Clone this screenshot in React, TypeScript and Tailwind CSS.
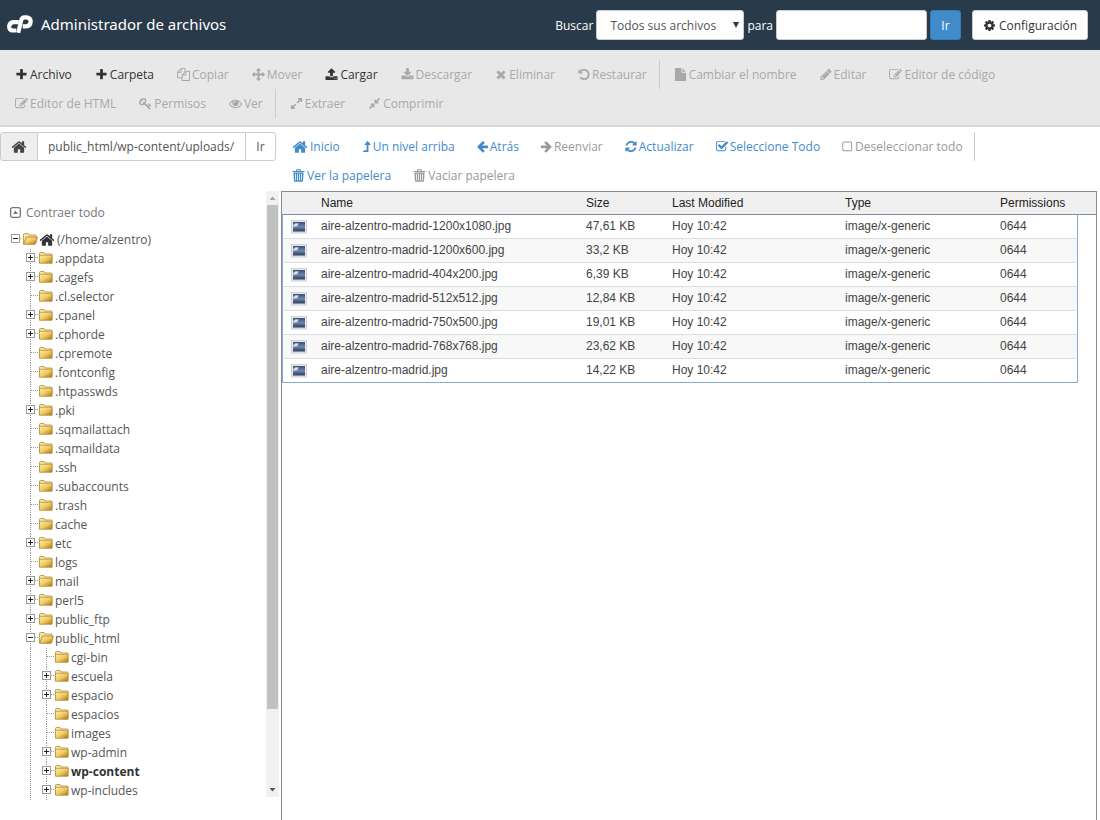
import { useState, type ReactNode } from "react";

const paths = {
  plus: "M1600 736v192q0 40-28 68t-68 28h-416v416q0 40-28 68t-68 28h-192q-40 0-68-28t-28-68v-416h-416q-40 0-68-28t-28-68v-192q0-40 28-68t68-28h416v-416q0-40 28-68t68-28h192q40 0 68 28t28 68v416h416q40 0 68 28t28 68z",
  move: "M1792 896q0 26-19 45l-256 256q-19 19-45 19t-45-19-19-45v-128h-384v384h128q26 0 45 19t19 45-19 45l-256 256q-19 19-45 19t-45-19l-256-256q-19-19-19-45t19-45 45-19h128v-384h-384v128q0 26-19 45t-45 19-45-19l-256-256q-19-19-19-45t19-45l256-256q19-19 45-19t45 19 19 45v128h384v-384h-128q-26 0-45-19t-19-45 19-45l256-256q19-19 45-19t45 19l256 256q19 19 19 45t-19 45-45 19h-128v384h384v-128q0-26 19-45t45-19 45 19l256 256q19 19 19 45z",
  copy: "M1696 384q40 0 68 28t28 68v1216q0 40-28 68t-68 28h-960q-40 0-68-28t-28-68v-288h-544q-40 0-68-28t-28-68v-672q0-40 20-88t48-76l408-408q28-28 76-48t88-20h416q40 0 68 28t28 68v328q68-40 128-40h416zm-544 213l-299 299h299v-299zm-640-384l-299 299h299v-299zm196 647l316-316v-416h-384v416q0 40-28 68t-68 28h-416v640h512v-256q0-40 20-88t48-76zm956 804v-1152h-384v416q0 40-28 68t-68 28h-416v640h896z",
  upload: "M1344 1472q0-26-19-45t-45-19-45 19-19 45 19 45 45 19 45-19 19-45zm256 0q0-26-19-45t-45-19-45 19-19 45 19 45 45 19 45-19 19-45zm128-224v320q0 40-28 68t-68 28h-1472q-40 0-68-28t-28-68v-320q0-40 28-68t68-28h427q21 56 70.5 92t110.5 36h256q61 0 110.5-36t70.5-92h427q40 0 68 28t28 68zm-325-648q-17 40-59 40h-256v448q0 26-19 45t-45 19h-256q-26 0-45-19t-19-45v-448h-256q-42 0-59-40-17-39 14-69l448-448q18-19 45-19t45 19l448 448q31 30 14 69z",
  download: "M1344 1344q0-26-19-45t-45-19-45 19-19 45 19 45 45 19 45-19 19-45zm256 0q0-26-19-45t-45-19-45 19-19 45 19 45 45 19 45-19 19-45zm128-224v320q0 40-28 68t-68 28h-1472q-40 0-68-28t-28-68v-320q0-40 28-68t68-28h465l135 136q58 56 136 56t136-56l136-136h464q40 0 68 28t28 68zm-325-569q17 41-14 70l-448 448q-18 19-45 19t-45-19l-448-448q-31-29-14-70 17-39 59-39h256v-448q0-26 19-45t45-19h256q26 0 45 19t19 45v448h256q42 0 59 39z",
  times: "M1490 1322q0 40-28 68l-136 136q-28 28-68 28t-68-28l-294-294-294 294q-28 28-68 28t-68-28l-136-136q-28-28-28-68t28-68l294-294-294-294q-28-28-28-68t28-68l136-136q28-28 68-28t68 28l294 294 294-294q28-28 68-28t68 28l136 136q28 28 28 68t-28 68l-294 294 294 294q28 28 28 68z",
  undo: "M1664 896q0 156-61 298t-164 245-245 164-298 61q-172 0-327-72.5t-264-204.5q-7-10-6.5-22.5t8.5-20.5l137-138q10-9 25-9 16 2 23 12 73 95 179 147t225 52q104 0 198.5-40.5t163.5-109.5 109.5-163.5 40.5-198.5-40.5-198.5-109.5-163.5-163.5-109.5-198.5-40.5q-98 0-188 35.5t-160 101.5l137 138q31 30 14 69-17 40-59 40h-448q-26 0-45-19t-19-45v-448q0-42 40-59 39-17 69 14l130 129q107-101 244.5-156.5t284.5-55.5q156 0 298 61t245 164 164 245 61 298z",
  file: "M1152 512v-472q22 14 36 28l408 408q14 14 28 36h-472zm-128 32q0 40 28 68t68 28h544v1056q0 40-28 68t-68 28h-1344q-40 0-68-28t-28-68v-1600q0-40 28-68t68-28h800v544z",
  pencil: "M491 1536l91-91-235-235-91 91v107h128v128h107zm523-928q0-22-22-22-10 0-17 7l-542 542q-7 7-7 17 0 22 22 22 10 0 17-7l542-542q7-7 7-17zm-54-192l416 416-832 832h-416v-416zm683 96q0 53-37 90l-166 166-416-416 166-165q36-38 90-38 53 0 91 38l235 234q37 39 37 91z",
  edit: "M888 1184l116-116-152-152-116 116v56h96v96h56zm440-720q-16-16-33 1l-350 350q-17 17-1 33t33-1l350-350q17-17 1-33zm80 594v190q0 119-84.5 203.5t-203.5 84.5h-832q-119 0-203.5-84.5t-84.5-203.5v-832q0-119 84.5-203.5t203.5-84.5h832q63 0 117 25 15 7 18 23 3 17-9 29l-49 49q-14 14-32 8-23-6-45-6h-832q-66 0-113 47t-47 113v832q0 66 47 113t113 47h832q66 0 113-47t47-113v-126q0-13 9-22l64-64q15-15 35-7t20 29zm-96-738l288 288-672 672h-288v-288zm444 132l-92 92-288-288 92-92q28-28 68-28t68 28l152 152q28 28 28 68t-28 68z",
  key: "M832 512q0-80-56-136t-136-56-136 56-56 136q0 42 19 83-41-19-83-19-80 0-136 56t-56 136 56 136 136 56 136-56 56-136q0-42-19-83 41 19 83 19 80 0 136-56t56-136zm851 704q0 17-49 66t-66 49q-9 0-28.5-16t-36.5-33-38.5-40-24.5-26l-96 96 220 220q28 28 28 68 0 42-39 81t-81 39q-40 0-68-28l-671-671q-176 131-365 131-163 0-265.5-102.5t-102.5-265.5q0-160 95-313t248-248 313-95q163 0 265.5 102.5t102.5 265.5q0 189-131 365l355 355 96-96q-3-3-26-24.5t-40-38.5-33-36.5-16-28.5q0-17 49-66t66-49q13 0 23 10 6 6 46 44.5t82 79.5 86.5 86 73 78 28.5 41z",
  eye: "M1664 960q-152-236-381-353 61 104 61 225 0 185-131.5 316.5t-316.5 131.5-316.5-131.5-131.5-316.5q0-121 61-225-229 117-381 353 133 205 333.5 326.5t434.5 121.5 434.5-121.5 333.5-326.5zm-720-384q0-20-14-34t-34-14q-125 0-214.5 89.5t-89.5 214.5q0 20 14 34t34 14 34-14 14-34q0-86 61-147t147-61q20 0 34-14t14-34zm848 384q0 34-20 69-140 230-376.5 368.5t-499.5 138.5-499.5-139-376.5-368q-20-35-20-69t20-69q140-229 376.5-368t499.5-139 499.5 139 376.5 368q20 35 20 69z",
  expand: "M883 1056q0 13-10 23l-332 332 144 144q19 19 19 45t-19 45-45 19h-448q-26 0-45-19t-19-45v-448q0-26 19-45t45-19 45 19l144 144 332-332q10-10 23-10t23 10l114 114q10 10 10 23zm781-864v448q0 26-19 45t-45 19-45-19l-144-144-332 332q-10 10-23 10t-23-10l-114-114q-10-10-10-23t10-23l332-332-144-144q-19-19-19-45t19-45 45-19h448q26 0 45 19t19 45z",
  compress: "M896 960v448q0 26-19 45t-45 19-45-19l-144-144-332 332q-10 10-23 10t-23-10l-114-114q-10-10-10-23t10-23l332-332-144-144q-19-19-19-45t19-45 45-19h448q26 0 45 19t19 45zm755-672q0 13-10 23l-332 332 144 144q19 19 19 45t-19 45-45 19h-448q-26 0-45-19t-19-45v-448q0-26 19-45t45-19 45 19l144 144 332-332q10-10 23-10t23 10l114 114q10 10 10 23z",
  cog: "M1152 896q0-106-75-181t-181-75-181 75-75 181 75 181 181 75 181-75 75-181zm512-109v222q0 12-8 23t-20 13l-185 28q-19 54-39 91 35 50 107 138 10 12 10 25t-9 23q-27 37-99 108t-94 71q-12 0-26-9l-138-108q-44 23-91 38-16 136-29 186-7 28-36 28h-222q-14 0-24.5-8.5t-11.5-21.5l-28-184q-49-16-90-37l-141 107q-10 9-25 9-14 0-25-11-126-114-165-168-7-10-7-23 0-12 8-23 15-21 51-66.5t54-70.5q-27-50-41-99l-183-27q-13-2-21-12.5t-8-23.5v-222q0-12 8-23t19-13l186-28q14-46 39-92-40-57-107-138-10-12-10-24 0-10 9-23 26-36 98.5-107.5t94.5-71.5q13 0 26 10l138 107q44-23 91-38 16-136 29-186 7-28 36-28h222q14 0 24.5 8.5t11.5 21.5l28 184q49 16 90 37l142-107q9-9 24-9 13 0 25 10 129 119 165 170 7 8 7 22 0 12-8 23-15 21-51 66.5t-54 70.5q26 50 41 98l183 28q13 2 21 12.5t8 23.5z",
  home: "M1472 992v480q0 26-19 45t-45 19h-384v-384h-256v384h-384q-26 0-45-19t-19-45v-480q0-1 .5-3t.5-3l575-474 575 474q1 2 1 6zm223-69l-62 74q-8 9-21 11h-3q-13 0-21-7l-692-577-692 577q-12 8-24 7-13-2-21-11l-62-74q-8-10-7-23.5t11-21.5l719-599q32-26 76-26t76 26l244 204v-195q0-14 9-23t23-9h192q14 0 23 9t9 23v408l219 182q10 8 11 21.5t-7 23.5z",
  levelUp: "M400 1664h736q32 0 32-32V704h224q42 0 58-36t-11-69L1090 182q-50-58-100 0L640 599q-27 33-11 69t58 36h225v704H624q-14 0-24 11l-224 192q-16 16-8 34t32 19z",
  left: "M1664 896v128q0 53-32.5 90.5t-84.5 37.5h-704l293 294q38 36 38 90t-38 90l-75 76q-37 37-90 37-52 0-91-37l-651-652q-37-37-37-90 0-52 37-91l651-650q38-38 91-38 52 0 90 38l75 74q38 38 38 91t-38 91l-293 293h704q52 0 84.5 37.5t32.5 90.5z",
  right: "M128 896v128q0 53 32.500 90.500t84.500 37.500h704l-293 294q-38 36-38 90t38 90l75 76q37 37 90 37 52 0 91-37l651-652q37-37 37-90 0-52-37-91l-651-650q-38-38-91-38-52 0-90 38l-75 74q-38 38-38 91t38 91l293 293h-704q-52 0-84.500 37.500t-32.500 90.500z",
  refresh: "M1639 1056q0 5-1 7-64 268-268 434.5t-478 166.5q-146 0-282.5-55t-243.5-157l-129 129q-19 19-45 19t-45-19-19-45v-448q0-26 19-45t45-19h448q26 0 45 19t19 45-19 45l-137 137q71 66 161 102t187 36q134 0 250-65t186-179q11-17 53-117 8-23 30-23h192q13 0 22.5 9.5t9.5 22.5zm25-800v448q0 26-19 45t-45 19h-448q-26 0-45-19t-19-45 19-45l138-138q-148-137-349-137-134 0-250 65t-186 179q-11 17-53 117-8 23-30 23h-199q-13 0-22.5-9.5t-9.500-22.500v-7q65-268 270-434.500t480-166.500q146 0 284 55.500t245 156.500l130-129q19-19 45-19t45 19 19 45z",
  checked: "M1472 930v318q0 119-84.5 203.5t-203.5 84.5h-832q-119 0-203.5-84.5t-84.5-203.5v-832q0-119 84.5-203.5t203.5-84.5h832q63 0 117 25 15 7 18 23 3 17-9 29l-49 49q-10 10-23 10-3 0-9-2-23-6-45-6h-832q-66 0-113 47t-47 113v832q0 66 47 113t113 47h832q66 0 113-47t47-113v-254q0-13 9-22l64-64q10-10 23-10 6 0 12 3 20 8 20 29zm231-489l-814 814q-24 24-57 24t-57-24l-430-430q-24-24-24-57t24-57l110-110q24-24 57-24t57 24l263 263 647-647q24-24 57-24t57 24l110 110q24 24 24 57t-24 57z",
  square: "M420 200h872q100 0 170 70t70 170v872q0 100-70 170t-170 70H420q-100 0-170-70t-70-170V440q0-100 70-170t170-70zm0 128q-112 0-112 112v872q0 112 112 112h872q112 0 112-112V440q0-112-112-112z",
  collapse: "M480 128h832q146 0 249 103t103 249v832q0 146-103 249t-249 103H480q-146 0-249-103t-103-249V480q0-146 103-249t249-103zm0 190q-162 0-162 162v832q0 162 162 162h832q162 0 162-162V480q0-162-162-162zM896 620l330 480H566z",
  trash: "M640 40h512q70 0 70 70v150h500v150H70V260h500V110q0-70 70-70zm70 130v90h372v-90zM200 490h1392l-70 1160q-8 110-118 110H388q-110 0-118-110zM420 640l40 960h110l-40-960zm290 0v960h110V640zm262 0v960h110V640zm290 0l-40 960h110l40-960z",
};

type IconName = keyof typeof paths;

function Icon({ name, className = "h-[13px] w-[13px]" }: { name: IconName; className?: string }) {
  return (
    <svg viewBox="0 0 1792 1792" preserveAspectRatio="xMidYMid slice" fill="currentColor" fillRule={name === "square" || name === "collapse" || name === "trash" ? "evenodd" : "nonzero"} aria-hidden="true" className={`shrink-0 overflow-visible ${className}`}>
      <path d={paths[name]} />
    </svg>
  );
}

function Logo() {
  return (
    <svg viewBox="0 0 26 18" aria-hidden="true" className="h-[18px] w-[26px]" fill="none" stroke="currentColor" strokeWidth="4.200">
      <path d="M11.800 7.100H6.400Q2.900 7.400 2.200 11q-.2 4.500 3.500 4.500h3.600" />
      <path d="M11.200 17.800l3-12.400Q14.800 2.400 17.600 2.300h1.600q4.400.2 4.500 4.200-.3 4.600-4.800 4.900h-3.200" />
    </svg>
  );
}

// Glyphs narrower than their square grid take less room beside the label.
const narrowIcons: Partial<Record<IconName, string>> = {
  home: "h-4 w-4",
  times: "h-[13px] w-3",
  undo: "h-[13px] w-3",
  pencil: "h-[13px] w-3",
  refresh: "h-[13px] w-3",
  checked: "h-[13px] w-3",
  left: "h-[13px] w-[11px]",
  right: "h-[13px] w-[11px]",
  square: "h-[13px] w-[11px]",
  levelUp: "h-[13px] w-[9px]",
};

function Tool({ icon, children, tone }: { icon: IconName; children: ReactNode; tone: "on" | "off" | "link" | "muted" }) {
  const tones = {
    on: "text-[#333333]",
    off: "text-[#a8a8a8]",
    link: "text-[#428bca]",
    muted: "text-[#999999]",
  };
  return (
    <button type="button" className={`flex h-[29px] items-center gap-0.5 px-[11px] whitespace-nowrap ${tones[tone]}`}>
      <Icon name={icon} className={narrowIcons[icon]} />
      {children}
    </button>
  );
}

function Divider() {
  return <span className="mr-0.5 h-[29px] w-px bg-[#cccccc]" />;
}

function Folder({ open = false }: { open?: boolean }) {
  return (
    <svg viewBox="0 0 16 15" aria-hidden="true" className="h-[15px] w-4 shrink-0">
      <defs>
        <linearGradient id="folderFill" x1="0" y1="0" x2="1" y2="1">
          <stop offset="0" stopColor="#fdeea6" />
          <stop offset="0.5" stopColor="#f0cb62" />
          <stop offset="1" stopColor="#a87414" />
        </linearGradient>
      </defs>
      <path d="M1.500 11.500V2.500q0-1 1-1h3.500l1 1.500h6.500q.5 0 .5.500v8z" fill="#f6e3a0" stroke="#b58b35" strokeWidth=".8" />
      {open ? (
        <path d="M1.500 12.300L4.500 5H15.500L13 12.300z" fill="url(#folderFill)" stroke="#a87d28" strokeWidth=".8" />
      ) : (
        <path d="M1.500 4.300H14V12.300H1.500z" fill="url(#folderFill)" stroke="#b08a3a" strokeWidth=".7" />
      )}
    </svg>
  );
}

function Branch({ state }: { state: "plus" | "minus" | "leaf" }) {
  return (
    <svg viewBox="0 0 16 19" shapeRendering="crispEdges" aria-hidden="true" className="h-[19px] w-4 shrink-0" fill="none">
      <path d="M8.500 0V19" stroke="#999" strokeDasharray="1 1" />
      <path d="M9 8.500H16" stroke="#999" strokeDasharray="1 1" />
      {state !== "leaf" && (
        <>
          <rect x="4.500" y="4.500" width="8" height="8" fill="#fff" stroke="#999" />
          <path d={state === "plus" ? "M6 8.500h5M8.500 6v5" : "M6 8.500h5"} stroke="#222" />
        </>
      )}
    </svg>
  );
}

type Node = { name: string; state: "plus" | "minus" | "leaf"; children?: Node[] };

const leaf = (name: string): Node => ({ name, state: "leaf" });
const closed = (name: string): Node => ({ name, state: "plus" });

const tree: Node[] = [
  closed(".appdata"),
  closed(".cagefs"),
  leaf(".cl.selector"),
  closed(".cpanel"),
  closed(".cphorde"),
  leaf(".cpremote"),
  leaf(".fontconfig"),
  leaf(".htpasswds"),
  closed(".pki"),
  leaf(".sqmailattach"),
  leaf(".sqmaildata"),
  leaf(".ssh"),
  leaf(".subaccounts"),
  leaf(".trash"),
  leaf("cache"),
  closed("etc"),
  leaf("logs"),
  closed("mail"),
  closed("perl5"),
  closed("public_ftp"),
  {
    name: "public_html",
    state: "minus",
    children: [
      leaf("cgi-bin"),
      closed("escuela"),
      closed("espacio"),
      leaf("espacios"),
      leaf("images"),
      closed("wp-admin"),
      closed("wp-content"),
      closed("wp-includes"),
    ],
  },
];

function TreeList({ nodes, nested = false }: { nodes: Node[]; nested?: boolean }) {
  return (
    <ul className={nested ? "ml-2 border-l border-dotted border-[#999999] pl-[7px]" : "pl-[22px]"}>
      {nodes.map((node) => (
        <li key={node.name}>
          <div className={`flex h-[19px] items-center ${node.name === "wp-content" ? "font-bold text-[#333333]" : ""}`}>
            <Branch state={node.state} />
            <Folder open={node.state === "minus"} />
            <span className="pl-px">{node.name}</span>
          </div>
          {node.children && <TreeList nodes={node.children} nested />}
        </li>
      ))}
    </ul>
  );
}

const files = [
  ["aire-alzentro-madrid-1200x1080.jpg", "47,61 KB"],
  ["aire-alzentro-madrid-1200x600.jpg", "33,2 KB"],
  ["aire-alzentro-madrid-404x200.jpg", "6,39 KB"],
  ["aire-alzentro-madrid-512x512.jpg", "12,84 KB"],
  ["aire-alzentro-madrid-750x500.jpg", "19,01 KB"],
  ["aire-alzentro-madrid-768x768.jpg", "23,62 KB"],
  ["aire-alzentro-madrid.jpg", "14,22 KB"],
];

function ImageIcon() {
  return (
    <svg viewBox="0 0 16 14" aria-hidden="true" className="ml-2 h-3.5 w-4">
      <defs>
        <linearGradient id="photoFill" x1="0" y1="0" x2="0" y2="1">
          <stop offset="0" stopColor="#3c4f70" />
          <stop offset="0.5" stopColor="#6c86ad" />
          <stop offset="1" stopColor="#2b3a58" />
        </linearGradient>
      </defs>
      <rect x=".5" y=".5" width="15" height="12.500" fill="#e4e7ec" stroke="#cdd1d8" />
      <rect x="2" y="2" width="12" height="9.500" fill="url(#photoFill)" />
      <path d="M2.500 4.500q2-2 5-1l-1 2.500-4 1z" fill="#d5deeb" />
    </svg>
  );
}

export default function App() {
  const [path, setPath] = useState("public_html/wp-content/uploads/");
  const [query, setQuery] = useState("");
  return (
    <div className="flex min-h-screen flex-col bg-white font-['Open_Sans',sans-serif] text-[12px] leading-[19px] text-[#555555]">
      <header className="flex h-[50px] items-center justify-between bg-[#293a4a] pr-3 pl-[7px] text-white">
        <div className="flex items-center gap-2 pb-0.5">
          <Logo />
          <h1 className="font-['Noto_Sans',sans-serif] text-[15px]">Administrador de archivos</h1>
        </div>
        <form className="flex items-center gap-[3px]" onSubmit={(e) => e.preventDefault()}>
          <label htmlFor="scope">Buscar</label>
          <div className="relative">
            <select id="scope" className="block h-[30px] w-[148px] appearance-none rounded-[3px] border border-[#cccccc] bg-white pl-[13px] text-[#555555]">
              <option>Todos sus archivos</option>
            </select>
            <svg viewBox="0 0 6 6" aria-hidden="true" className="pointer-events-none absolute top-3 right-[5px] size-1.5" fill="#333333">
              <path d="M0 0h6L3 6z" />
            </svg>
          </div>
          <label htmlFor="query">para</label>
          <input id="query" value={query} onChange={(e) => setQuery(e.target.value)} className="h-[30px] w-[151px] rounded-[3px] border border-[#cccccc] bg-white px-3 text-[#555555]" />
          <button type="submit" className="h-[30px] w-[31px] rounded-[3px] border border-[#357ebd] bg-[#428bca]">Ir</button>
          <button type="button" className="ml-2 flex h-[30px] items-center gap-[3px] rounded-[3px] border border-[#cccccc] bg-white px-2.5 text-[#333333]">
            <Icon name="cog" />
            Configuración
          </button>
        </form>
      </header>

      <nav className="flex flex-wrap gap-x-px border-b-2 border-[#d9d9d9] bg-[#e8e8e8] pt-[10px] pr-2 pb-[7px] pl-1">
        <Tool icon="plus" tone="on">Archivo</Tool>
        <Tool icon="plus" tone="on">Carpeta</Tool>
        <Tool icon="copy" tone="off">Copiar</Tool>
        <Tool icon="move" tone="off">Mover</Tool>
        <Tool icon="upload" tone="on">Cargar</Tool>
        <Tool icon="download" tone="off">Descargar</Tool>
        <Tool icon="times" tone="off">Eliminar</Tool>
        <Tool icon="undo" tone="off">Restaurar</Tool>
        <Divider />
        <Tool icon="file" tone="off">Cambiar el nombre</Tool>
        <Tool icon="pencil" tone="off">Editar</Tool>
        <Tool icon="edit" tone="off">Editor de código</Tool>
        <Tool icon="edit" tone="off">Editor de HTML</Tool>
        <Tool icon="key" tone="off">Permisos</Tool>
        <Tool icon="eye" tone="off">Ver</Tool>
        <Divider />
        <Tool icon="expand" tone="off">Extraer</Tool>
        <Tool icon="compress" tone="off">Comprimir</Tool>
      </nav>

      <div className="flex grow">
        <aside className="flex w-[281px] shrink-0 flex-col pt-[5px]">
          <form className="flex h-[29px] w-[276px]" onSubmit={(e) => e.preventDefault()}>
            <button type="button" aria-label="Inicio" className="flex w-[38px] items-center justify-center rounded-l-[3px] border border-[#cccccc] bg-[#eeeeee] text-[#444444]">
              <Icon name="home" className="size-4" />
            </button>
            <input aria-label="Ruta" value={path} onChange={(e) => setPath(e.target.value)} className="min-w-0 grow border-y border-[#cccccc] px-2.5" />
            <button type="submit" className="w-[31px] rounded-r-[3px] border border-[#cccccc]">Ir</button>
          </form>

          <div className="mt-[30px] flex h-[606px]">
            <div className="grow pt-3">
              <button type="button" className="ml-[9px] flex items-center gap-1 text-[#777777]">
                <Icon name="collapse" />
                Contraer todo
              </button>
              <div className="mt-2 flex h-[19px] items-center pl-[7px]">
                <svg viewBox="0 0 15 19" shapeRendering="crispEdges" aria-hidden="true" className="h-[19px] w-[15px] shrink-0" fill="none">
                  <rect x="4.500" y="4.500" width="8" height="8" stroke="#999" />
                  <path d="M6 8.500h5" stroke="#222" />
                  <path d="M13 8.500h2" stroke="#999" strokeDasharray="1 1" />
                </svg>
                <Folder open />
                <Icon name="home" className="ml-px size-4 text-[#333333]" />
                <span className="pl-0.5">(/home/alzentro)</span>
              </div>
              <TreeList nodes={tree} />
            </div>
            <div className="mr-0.5 flex w-[13px] shrink-0 flex-col items-center bg-[#f1f1f1]" aria-hidden="true">
              <svg viewBox="0 0 13 14" className="h-3.5 w-[13px]" fill="#a3a3a3"><path d="M3.500 9h6L6.500 5.500z" /></svg>
              <div className="h-[504px] w-[11px] bg-[#c1c1c1]" />
              <div className="grow" />
              <svg viewBox="0 0 13 14" className="h-3.5 w-[13px]" fill="#505050"><path d="M3.500 5h6L6.500 8.500z" /></svg>
            </div>
          </div>
        </aside>

        <main className="flex min-w-0 grow flex-col pt-[5px] pr-[3px]">
          <nav className="flex flex-wrap pr-20">
            <Tool icon="home" tone="link">Inicio</Tool>
            <Tool icon="levelUp" tone="link">Un nivel arriba</Tool>
            <Tool icon="left" tone="link">Atrás</Tool>
            <Tool icon="right" tone="muted">Reenviar</Tool>
            <Tool icon="refresh" tone="link">Actualizar</Tool>
            <Tool icon="checked" tone="link">Seleccione Todo</Tool>
            <Tool icon="square" tone="muted">Deseleccionar todo</Tool>
            <Divider />
            <Tool icon="trash" tone="link">Ver la papelera</Tool>
            <Tool icon="trash" tone="muted">Vaciar papelera</Tool>
          </nav>

          <section className="mt-px grow border-x border-t border-[#8a8c94] font-['Liberation_Sans',Arial,sans-serif]">
            <table className="w-full table-fixed border-separate border-spacing-0 text-left">
              <colgroup>
                <col className="w-[39px]" />
                <col className="w-[265px]" />
                <col className="w-[86px]" />
                <col className="w-[173px]" />
                <col className="w-[155px]" />
                <col />
                <col className="w-[18px]" />
              </colgroup>
              <thead>
                <tr className="h-[23px] bg-[#f0f0f0] text-[#222222] [&>th]:border-b [&>th]:border-[#858ca0] [&>th]:p-0 [&>th]:font-normal">
                  <th aria-label="Icono" />
                  <th>Name</th>
                  <th>Size</th>
                  <th>Last Modified</th>
                  <th>Type</th>
                  <th>Permissions</th>
                  <th aria-hidden="true" />
                </tr>
              </thead>
              <tbody>
                {files.map(([name, size], i) => {
                  const line = i === files.length - 1 ? "border-[#84abd6]" : "border-[#dddddd]";
                  const cell = `h-6 border-b p-0 ${line} ${i % 2 ? "bg-[#f8f8f8]" : "bg-white"}`;
                  return (
                    <tr key={name} className="text-[#444444]">
                      <td className={`${cell} border-l border-l-[#84abd6]`}><ImageIcon /></td>
                      <td className={cell}>{name}</td>
                      <td className={cell}>{size}</td>
                      <td className={cell}>Hoy 10:42</td>
                      <td className={cell}>image/x-generic</td>
                      <td className={`${cell} border-r border-r-[#84abd6]`}>0644</td>
                      <td />
                    </tr>
                  );
                })}
              </tbody>
            </table>
          </section>
        </main>
      </div>
    </div>
  );
}
